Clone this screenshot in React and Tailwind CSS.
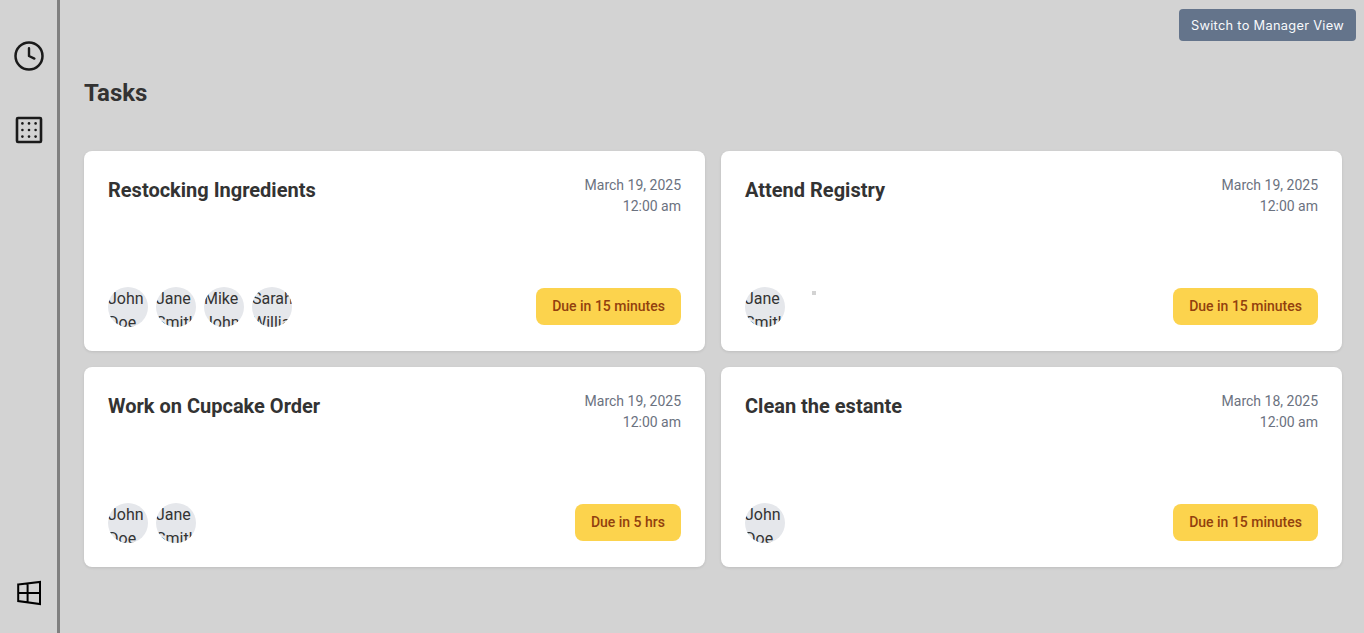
const tasks = [
  { title: "Restocking Ingredients", date: "March 19, 2025", due: "Due in 15 minutes", people: ["John Doe", "Jane Smith", "Mike Johnson", "Sarah Williams"] },
  { title: "Attend Registry", date: "March 19, 2025", due: "Due in 15 minutes", people: ["Jane Smith"], marker: true },
  { title: "Work on Cupcake Order", date: "March 19, 2025", due: "Due in 5 hrs", people: ["John Doe", "Jane Smith"] },
  { title: "Clean the estante", date: "March 18, 2025", due: "Due in 15 minutes", people: ["John Doe"] },
];

function ClockIcon() {
  return (
    <svg width="32" height="32" viewBox="0 0 32 32" fill="none" stroke="#1a1a1a" strokeLinecap="round" strokeLinejoin="round">
      <circle cx="16" cy="16" r="13.5" strokeWidth="2.5" />
      <path d="M16 8.3V16l5.4 2.6" strokeWidth="2.4" />
    </svg>
  );
}

function GridIcon() {
  return (
    <svg width="32" height="32" viewBox="0 0 32 32" fill="none">
      <rect x="4" y="4" width="24" height="24" rx="1" stroke="#1a1a1a" strokeWidth="2.6" />
      {[9.4, 16, 22.6].map((y) =>
        [9.4, 16, 22.6].map((x) => <circle key={`${x}-${y}`} cx={x} cy={y} r="1.3" fill="#1a1a1a" />)
      )}
    </svg>
  );
}

function WindowIcon() {
  return (
    <svg width="32" height="32" viewBox="0 0 32 32" fill="none" stroke="#000" strokeWidth="2">
      <path d="M5.2 7.5 27 4.9V27.1L5.2 24.1ZM14.6 6.4V25.4M5.2 16H27" />
    </svg>
  );
}

function Avatar({ name }) {
  return (
    <div className="h-10 w-10 shrink-0 overflow-hidden rounded-full bg-[#e5e7eb] text-base leading-6">{name}</div>
  );
}

function TaskCard({ task }) {
  return (
    <article className="flex h-[200px] flex-col justify-between rounded-lg bg-white p-6 shadow-[0_1px_3px_rgba(0,0,0,0.1)]">
      <div className="flex items-start justify-between">
        <h2 className="text-xl leading-[30px] font-bold">{task.title}</h2>
        <div className="text-right text-sm leading-[21px] text-[#6b7280]">
          <p>{task.date}</p>
          <p>12:00 am</p>
        </div>
      </div>
      <div className="flex items-center justify-between">
        <div className="flex gap-2">
          {task.people.map((name) => (
            <Avatar key={name} name={name} />
          ))}
          {task.marker && <span className="mt-1 ml-[19px] h-1 w-1 bg-[#d3d3d3]" />}
        </div>
        <span className="mb-px rounded-lg bg-[#fcd34d] px-4 py-2 text-sm leading-[21px] font-medium text-[#92400e]">{task.due}</span>
      </div>
    </article>
  );
}

export default function App() {
  return (
    <div className="flex h-[633px] overflow-hidden bg-[#d3d3d3] font-['Roboto',sans-serif] text-[#333333] antialiased">
      <aside className="flex w-[60px] shrink-0 flex-col items-center border-r-3 border-[#808080] pt-10 pb-6">
        <ClockIcon />
        <div className="mt-[42px]">
          <GridIcon />
        </div>
        <div className="mt-auto">
          <WindowIcon />
        </div>
      </aside>
      <main className="flex flex-1 flex-col">
        <header className="flex h-[60px] shrink-0 justify-end pt-[9px] pr-2">
          <button className="h-8 w-[177px] rounded bg-[#64748b] pt-px font-['Inter',sans-serif] text-[12.8px] tracking-[0.3px] whitespace-nowrap text-[#f8fafc]">
            Switch to Manager View
          </button>
        </header>
        <section className="pr-[22px] pl-6">
          <h1 className="mt-[15px] text-2xl leading-9 font-bold">Tasks</h1>
          <div className="mt-10 grid grid-cols-2 gap-4">
            {tasks.map((task) => (
              <TaskCard key={task.title} task={task} />
            ))}
          </div>
        </section>
      </main>
    </div>
  );
}
